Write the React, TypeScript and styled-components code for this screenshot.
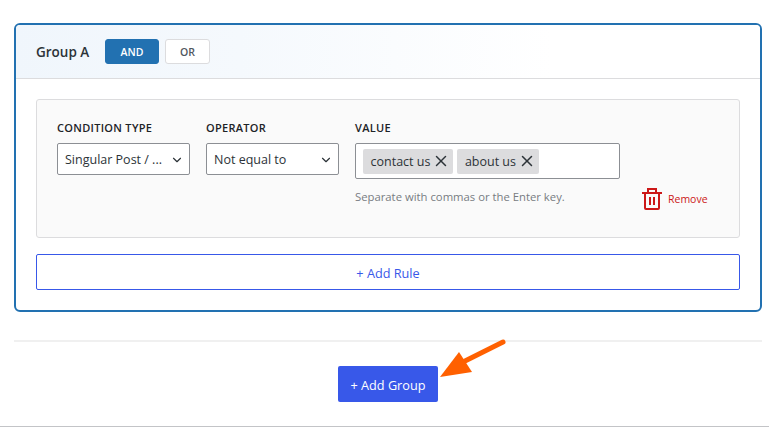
import { X, ChevronDown } from 'lucide-react';
import styled, { createGlobalStyle } from 'styled-components';

const GlobalStyle = createGlobalStyle`
  html, body {
    margin: 0;
    background: #fff;
    font-family: "Open Sans", "Noto Sans", sans-serif;
    color: #1d2327;
  }
  * { box-sizing: border-box; }
`;

const Page = styled.div`
  width: 769px;
  height: 427px;
  padding: 23px 7px 0 14px;
  border-bottom: 1px solid #c3c4c7;
  overflow: hidden;
`;

const GroupCard = styled.section`
  border: 2px solid #2271b1;
  border-radius: 6px;
  height: 289px;
  overflow: hidden;
`;

const GroupHeader = styled.header`
  height: 54px;
  padding: 0 20px;
  display: flex;
  align-items: center;
  border-bottom: 1px solid #dcdcde;
  background: linear-gradient(90deg, #f0f6fc 0%, #f5f9fd 30%, #ffffff 72%);
`;

const GroupTitle = styled.h3`
  margin: 0 16px 0 0;
  font-size: 13.5px;
  font-weight: 600;
  color: #2c3338;
  width: 53px;
  white-space: nowrap;
`;

const ToggleButton = styled.button<{ $active?: boolean }>`
  height: 25px;
  width: ${({ $active }) => ($active ? '54px' : '45px')};
  margin-right: ${({ $active }) => ($active ? '6px' : '0')};
  padding: 0;
  border-radius: 3px;
  border: 1px solid ${({ $active }) => ($active ? '#2271b1' : '#dcdcde')};
  background: ${({ $active }) => ($active ? '#2271b1' : '#fff')};
  color: ${({ $active }) => ($active ? '#fff' : '#50575e')};
  font-family: inherit;
  font-size: 10.5px;
  font-weight: 600;
`;

const GroupBody = styled.div`
  padding: 20px 20px 0;
  display: flex;
  flex-direction: column;
  gap: 16px;
`;

const RulePanel = styled.div`
  height: 139px;
  padding: 21px 20px 0;
  display: flex;
  background: #fafafa;
  border: 1px solid #dcdcde;
  border-radius: 3px;
`;

const Field = styled.div<{ $width: number }>`
  width: ${({ $width }) => $width}px;
  margin-right: 16px;
  display: flex;
  flex-direction: column;
  flex-shrink: 0;
`;

const FieldLabel = styled.label`
  height: 14px;
  margin-bottom: 8px;
  font-size: 11px;
  line-height: 14px;
  font-weight: 600;
  letter-spacing: 0.3px;
  color: #1d2327;
  white-space: nowrap;
`;

const SelectBox = styled.div`
  height: 32px;
  padding: 0 5px 0 7px;
  display: flex;
  align-items: center;
  justify-content: space-between;
  background: #fff;
  border: 1px solid #8c8f94;
  border-radius: 2px;
  font-size: 12.5px;
  color: #2c3338;
  white-space: nowrap;
  svg { color: #2c3338; flex-shrink: 0; margin-top: 2px; }
`;

const TagBox = styled.div`
  height: 36px;
  padding: 0 7px;
  display: flex;
  align-items: center;
  gap: 4px;
  background: #fff;
  border: 1px solid #8c8f94;
  border-radius: 2px;
`;

const Tag = styled.span`
  height: 25px;
  padding: 0 3px 0 7.5px;
  display: flex;
  align-items: center;
  gap: 2px;
  background: #dcdcde;
  border-radius: 2px;
  font-size: 12.5px;
  color: #2c3338;
  white-space: nowrap;
`;

const HelpText = styled.p`
  margin: 10px 0 0;
  font-size: 11.3px;
  line-height: 15px;
  color: #787c82;
  white-space: nowrap;
`;

const RemoveColumn = styled.div`
  display: flex;
  align-items: flex-end;
  height: 89px;
  margin-left: 4px;
`;

const RemoveButton = styled.button`
  margin-left: 2px;
  padding: 0;
  border: 0;
  background: none;
  display: flex;
  align-items: center;
  gap: 6px;
  font-family: inherit;
  font-size: 10.5px;
  color: #cc1818;
  white-space: nowrap;
`;

const AddRuleButton = styled.button`
  height: 36px;
  padding: 1px 0 0;
  background: #fff;
  border: 1px solid #3858e9;
  border-radius: 2px;
  color: #3858e9;
  font-family: inherit;
  font-size: 12.7px;
`;

const Divider = styled.hr`
  margin: 28px 0 24px;
  height: 2px;
  border: 0;
  background: #f0f0f0;
`;

const Footer = styled.div`
  display: flex;
  justify-content: center;
`;

const AddGroupWrap = styled.div`
  position: relative;
`;

const AddGroupButton = styled.button`
  width: 100px;
  height: 36px;
  padding: 2px 0 0;
  background: #3858e9;
  border: 0;
  border-radius: 2px;
  color: #fff;
  font-family: inherit;
  font-size: 12.7px;
`;

const Arrow = styled.svg`
  position: absolute;
  left: 100px;
  top: -30px;
`;

const TrashIcon = () => (
  <svg width="20" height="22" viewBox="0 0 20 22" fill="none" stroke="#cc1818" strokeWidth="2">
    <path d="M0 5h20" />
    <path d="M6 5V1h8v4" />
    <path d="M3 5v15a1 1 0 0 0 1 1h12a1 1 0 0 0 1-1V5" />
    <path d="M8 9v8M12 9v8" />
  </svg>
);

export default function App() {
  return (
    <Page>
      <GlobalStyle />
      <GroupCard>
        <GroupHeader>
          <GroupTitle>Group A</GroupTitle>
          <ToggleButton $active>AND</ToggleButton>
          <ToggleButton>OR</ToggleButton>
        </GroupHeader>
        <GroupBody>
          <RulePanel>
            <Field $width={133}>
              <FieldLabel>CONDITION TYPE</FieldLabel>
              <SelectBox>
                Singular Post / ...
                <ChevronDown size={14} />
              </SelectBox>
            </Field>
            <Field $width={133}>
              <FieldLabel>OPERATOR</FieldLabel>
              <SelectBox>
                Not equal to
                <ChevronDown size={14} />
              </SelectBox>
            </Field>
            <Field $width={265}>
              <FieldLabel>VALUE</FieldLabel>
              <TagBox>
                <Tag>
                  contact us
                  <X size={18} />
                </Tag>
                <Tag>
                  about us
                  <X size={18} />
                </Tag>
              </TagBox>
              <HelpText>Separate with commas or the Enter key.</HelpText>
            </Field>
            <RemoveColumn>
              <RemoveButton>
                <TrashIcon />
                Remove
              </RemoveButton>
            </RemoveColumn>
          </RulePanel>
          <AddRuleButton>+ Add Rule</AddRuleButton>
        </GroupBody>
      </GroupCard>
      <Divider />
      <Footer>
        <AddGroupWrap>
          <AddGroupButton>+ Add Group</AddGroupButton>
          <Arrow width="70" height="50" viewBox="0 0 70 50">
            <path d="M65 6L27 25" stroke="#ff6000" strokeWidth="5" strokeLinecap="round" />
            <path d="M2 41L21 16L34 36Z" fill="#ff6000" />
          </Arrow>
        </AddGroupWrap>
      </Footer>
    </Page>
  );
}
